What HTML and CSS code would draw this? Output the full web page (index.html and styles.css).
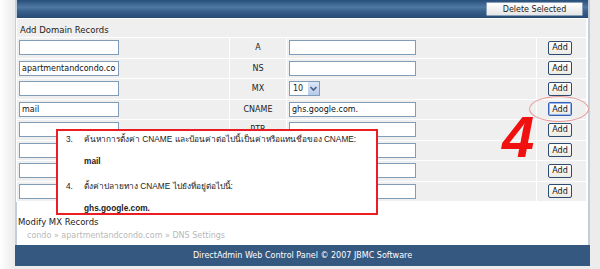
FILE: index.html
```html
<!DOCTYPE html>
<html lang="th">
  <head>
    <meta charset="UTF-8" />
    <title>DNS Settings</title>
    <link rel="stylesheet" href="styles.css">
  </head>
  <body>
    <div class="frame">
      <div class="topbar">
        <button class="btn-delete">Delete Selected</button>
      </div>

      <table class="records">
        <tr>
          <td class="caption" colspan="4">Add Domain Records</td>
        </tr>
        <tr>
          <td class="c-name"><input class="in-name" type="text" /></td>
          <td class="c-type">A</td>
          <td class="c-value"><input class="in-value" type="text" /></td>
          <td class="c-add"><button class="btn-add">Add</button></td>
        </tr>
        <tr>
          <td class="c-name"><input class="in-name" type="text" value="apartmentandcondo.co" /></td>
          <td class="c-type">NS</td>
          <td class="c-value"><input class="in-value" type="text" /></td>
          <td class="c-add"><button class="btn-add">Add</button></td>
        </tr>
        <tr>
          <td class="c-name"><input class="in-name" type="text" /></td>
          <td class="c-type">MX</td>
          <td class="c-value">
            <span class="select">10<span class="arrow"><svg width="9" height="7" viewBox="0 0 9 7"><path d="M1.5 2 L4.5 5 L7.5 2" fill="none" stroke="#4d6185" stroke-width="1.6"/></svg></span></span>
          </td>
          <td class="c-add"><button class="btn-add">Add</button></td>
        </tr>
        <tr>
          <td class="c-name"><input class="in-name" type="text" value="mail" /></td>
          <td class="c-type">CNAME</td>
          <td class="c-value"><input class="in-value" type="text" value="ghs.google.com." /></td>
          <td class="c-add"><button class="btn-add focused">Add</button></td>
        </tr>
        <tr>
          <td class="c-name"><input class="in-name" type="text" /></td>
          <td class="c-type">PTR</td>
          <td class="c-value"><input class="in-value" type="text" /></td>
          <td class="c-add"><button class="btn-add">Add</button></td>
        </tr>
        <tr>
          <td class="c-name"><input class="in-name" type="text" /></td>
          <td class="c-type">TXT</td>
          <td class="c-value"><input class="in-value" type="text" /></td>
          <td class="c-add"><button class="btn-add">Add</button></td>
        </tr>
        <tr>
          <td class="c-name"><input class="in-name" type="text" /></td>
          <td class="c-type">AAAA</td>
          <td class="c-value"><input class="in-value" type="text" /></td>
          <td class="c-add"><button class="btn-add">Add</button></td>
        </tr>
        <tr>
          <td class="c-name"><input class="in-name" type="text" /></td>
          <td class="c-type">SRV</td>
          <td class="c-value"><input class="in-value" type="text" /></td>
          <td class="c-add"><button class="btn-add">Add</button></td>
        </tr>
      </table>

      <div class="section-title">Modify MX Records</div>
      <div class="crumbs">condo &#187; apartmentandcondo.com &#187; DNS Settings</div>

      <div class="footer">DirectAdmin Web Control Panel &copy; 2007 JBMC Software</div>

      <!-- คำอธิบายที่วางทับบนภาพ -->
      <div class="callout">
        <div class="step first"><span class="num">3.</span><span>ค้นหาการตั้งค่า CNAME และป้อนค่าต่อไปนี้เป็นค่าหรือแทนชื่อของ CNAME:</span></div>
        <div class="value">mail</div>
        <div class="step"><span class="num">4.</span><span>ตั้งค่าปลายทาง CNAME ไปยังที่อยู่ต่อไปนี้:</span></div>
        <div class="value">ghs.google.com.</div>
      </div>
      <div class="big-num">4</div>
      <div class="ring"></div>
    </div>
  </body>
</html>
```

FILE: styles.css
```css
body {
  margin: 0;
  padding: 0;
  background: linear-gradient(to right, #ffffff, #ececec 14px, #ececec);
  font-family: "DejaVu Sans", Verdana, sans-serif;
  font-size: 8px;
  color: #222222;
}
.frame {
  position: relative;
  margin-left: 15px;
  width: 571px;
  height: 266px;
  background: #ffffff;
  border-left: 2px solid #c3ceda;
  border-right: 2px solid #c3ceda;
  display: flex;
  flex-direction: column;
}
.topbar {
  height: 18px;
  background: linear-gradient(#284e79, #4f78a2 40%, #3a628d 60%, #284a72);
  display: flex;
  justify-content: flex-end;
  align-items: center;
  padding-right: 5px;
}
.btn-delete {
  width: 97px;
  height: 14px;
  padding: 0;
  font-family: inherit;
  font-size: 8px;
  color: #222222;
  background: linear-gradient(#ffffff, #e6e6e6);
  border: 1px solid #8aa0b8;
  border-radius: 1px;
}
.records {
  border-collapse: separate;
  border-spacing: 1px;
  width: 571px;
  margin: 0 -1px;
  background: #ffffff;
}
.records td {
  background: #efefef;
  height: 19.5px;
  padding: 0;
}
.records .caption {
  height: 18px;
  padding: 3px 0 0 3px;
  box-sizing: border-box;
  font-size: 8.5px;
  color: #222222;
}
.c-name {
  width: 210px;
  padding-left: 2px !important;
}
.c-type {
  width: 56px;
  text-align: center;
}
.c-value {
  width: 247px;
  padding-left: 2px !important;
}
.c-add {
  text-align: center;
}
.in-name,
.in-value {
  box-sizing: border-box;
  height: 15px;
  padding: 0 1px 0 2px;
  border: 1px solid #7f9db9;
  font-family: inherit;
  font-size: 8px;
  color: #111111;
  background: #ffffff;
  display: block;
}
.in-name {
  width: 100px;
}
.in-value {
  width: 127px;
}
.select {
  box-sizing: border-box;
  display: flex;
  align-items: center;
  justify-content: space-between;
  width: 31px;
  height: 15px;
  padding-left: 3px;
  border: 1px solid #7f9db9;
  background: #ffffff;
  font-size: 8px;
}
.arrow {
  display: flex;
  align-items: center;
  justify-content: center;
  width: 11px;
  height: 13px;
  background: linear-gradient(#dce6f6, #b7c9ec);
}
.btn-add {
  width: 24px;
  height: 14px;
  padding: 0;
  font-family: inherit;
  font-size: 8px;
  color: #111111;
  background: linear-gradient(#ffffff, #ecebe4);
  border: 1px solid #2d4a70;
  border-radius: 2px;
  margin-right: 3px;
}
.btn-add.focused {
  border-color: #3162b8;
  box-shadow: inset 0 0 0 1px #9ab8ec;
}
.section-title {
  margin-top: 15px;
  padding-left: 1px;
  font-size: 8.5px;
  color: #222222;
}
.crumbs {
  margin-top: 4px;
  padding-left: 10px;
  font-size: 8px;
  color: #b8b8b8;
}
.footer {
  margin-top: auto;
  margin-left: -2px;
  margin-right: -2px;
  height: 21px;
  background: #34587f;
  color: #ffffff;
  font-size: 8px;
  display: flex;
  align-items: center;
  justify-content: center;
}
.callout {
  position: absolute;
  left: 39px;
  top: 129px;
  width: 306px;
  height: 82px;
  border: 2px solid #ec1c24;
  background: #ffffff;
  font-family: "Liberation Sans", "Noto Sans", "DejaVu Sans", sans-serif;
  font-size: 8.3px;
  line-height: 12px;
  color: #222222;
  padding: 0 6px;
}
.step {
  display: flex;
  height: 12px;
  margin-top: 13px;
}
.step.first {
  margin-top: 2px;
}
.num {
  width: 18px;
  padding-left: 2px;
}
.value {
  font-weight: bold;
  padding-left: 20px;
  margin-top: 10px;
  height: 12px;
}
.big-num {
  position: absolute;
  left: 485px;
  top: 108px;
  font-family: "Liberation Sans", sans-serif;
  font-weight: bold;
  font-style: italic;
  font-size: 58px;
  color: #f01010;
  line-height: 1;
}
.ring {
  position: absolute;
  left: 512px;
  top: 96px;
  width: 58px;
  height: 24px;
  border: 1px solid #e99a9a;
  border-radius: 50%;
}
```
